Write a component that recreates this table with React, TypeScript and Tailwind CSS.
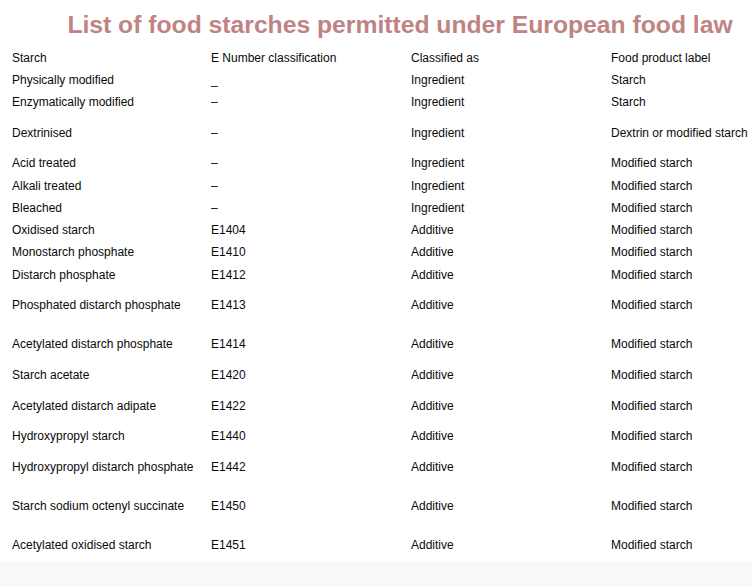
import React from 'react';

interface Row {
    starch: string;
    eNumber: string;
    classified: string;
    label: string;
    h: string; // row height
}

// heights follow the spacing between rows in the source table
const rows: Row[] = [
    { starch: 'Starch', eNumber: 'E Number classification', classified: 'Classified as', label: 'Food product label', h: 'h-[22px]' },
    { starch: 'Physically modified', eNumber: '_', classified: 'Ingredient', label: 'Starch', h: 'h-[22px]' },
    { starch: 'Enzymatically modified', eNumber: '–', classified: 'Ingredient', label: 'Starch', h: 'h-[31px]' },
    { starch: 'Dextrinised', eNumber: '–', classified: 'Ingredient', label: 'Dextrin or modified starch', h: 'h-[30px]' },
    { starch: 'Acid treated', eNumber: '–', classified: 'Ingredient', label: 'Modified starch', h: 'h-[23px]' },
    { starch: 'Alkali treated', eNumber: '–', classified: 'Ingredient', label: 'Modified starch', h: 'h-[22px]' },
    { starch: 'Bleached', eNumber: '–', classified: 'Ingredient', label: 'Modified starch', h: 'h-[22px]' },
    { starch: 'Oxidised starch', eNumber: 'E1404', classified: 'Additive', label: 'Modified starch', h: 'h-[22px]' },
    { starch: 'Monostarch phosphate', eNumber: 'E1410', classified: 'Additive', label: 'Modified starch', h: 'h-[23px]' },
    { starch: 'Distarch phosphate', eNumber: 'E1412', classified: 'Additive', label: 'Modified starch', h: 'h-[30px]' },
    { starch: 'Phosphated distarch phosphate', eNumber: 'E1413', classified: 'Additive', label: 'Modified starch', h: 'h-[39px]' },
    { starch: 'Acetylated distarch phosphate', eNumber: 'E1414', classified: 'Additive', label: 'Modified starch', h: 'h-[31px]' },
    { starch: 'Starch acetate', eNumber: 'E1420', classified: 'Additive', label: 'Modified starch', h: 'h-[31px]' },
    { starch: 'Acetylated distarch adipate', eNumber: 'E1422', classified: 'Additive', label: 'Modified starch', h: 'h-[30px]' },
    { starch: 'Hydroxypropyl starch', eNumber: 'E1440', classified: 'Additive', label: 'Modified starch', h: 'h-[31px]' },
    { starch: 'Hydroxypropyl distarch phosphate', eNumber: 'E1442', classified: 'Additive', label: 'Modified starch', h: 'h-[39px]' },
    { starch: 'Starch sodium octenyl succinate', eNumber: 'E1450', classified: 'Additive', label: 'Modified starch', h: 'h-[39px]' },
    { starch: 'Acetylated oxidised starch', eNumber: 'E1451', classified: 'Additive', label: 'Modified starch', h: 'h-[28px]' },
];

const App: React.FC = () => {
    return (
        <div className="min-h-[587px] bg-[#f9f9f9] font-['Liberation_Sans',Arial,sans-serif]">
            <div className="bg-white">
                <h1 className="h-[46px] pt-[11px] pl-[48px] text-center text-[24.7px] leading-[28px] font-bold text-[#c08383]">
                    List of food starches permitted under European food law
                </h1>
                <div className="pl-[12px]">
                    {rows.map((row) => (
                        <div key={row.starch} className={`grid grid-cols-[199px_200px_200px_141px] pt-[5px] text-[12px] leading-[14px] text-[#0a0a0a] whitespace-nowrap ${row.h}`}>
                            <div>{row.starch}</div>
                            <div>{row.eNumber}</div>
                            <div>{row.classified}</div>
                            <div>{row.label}</div>
                        </div>
                    ))}
                </div>
            </div>
        </div>
    );
};

export default App;
